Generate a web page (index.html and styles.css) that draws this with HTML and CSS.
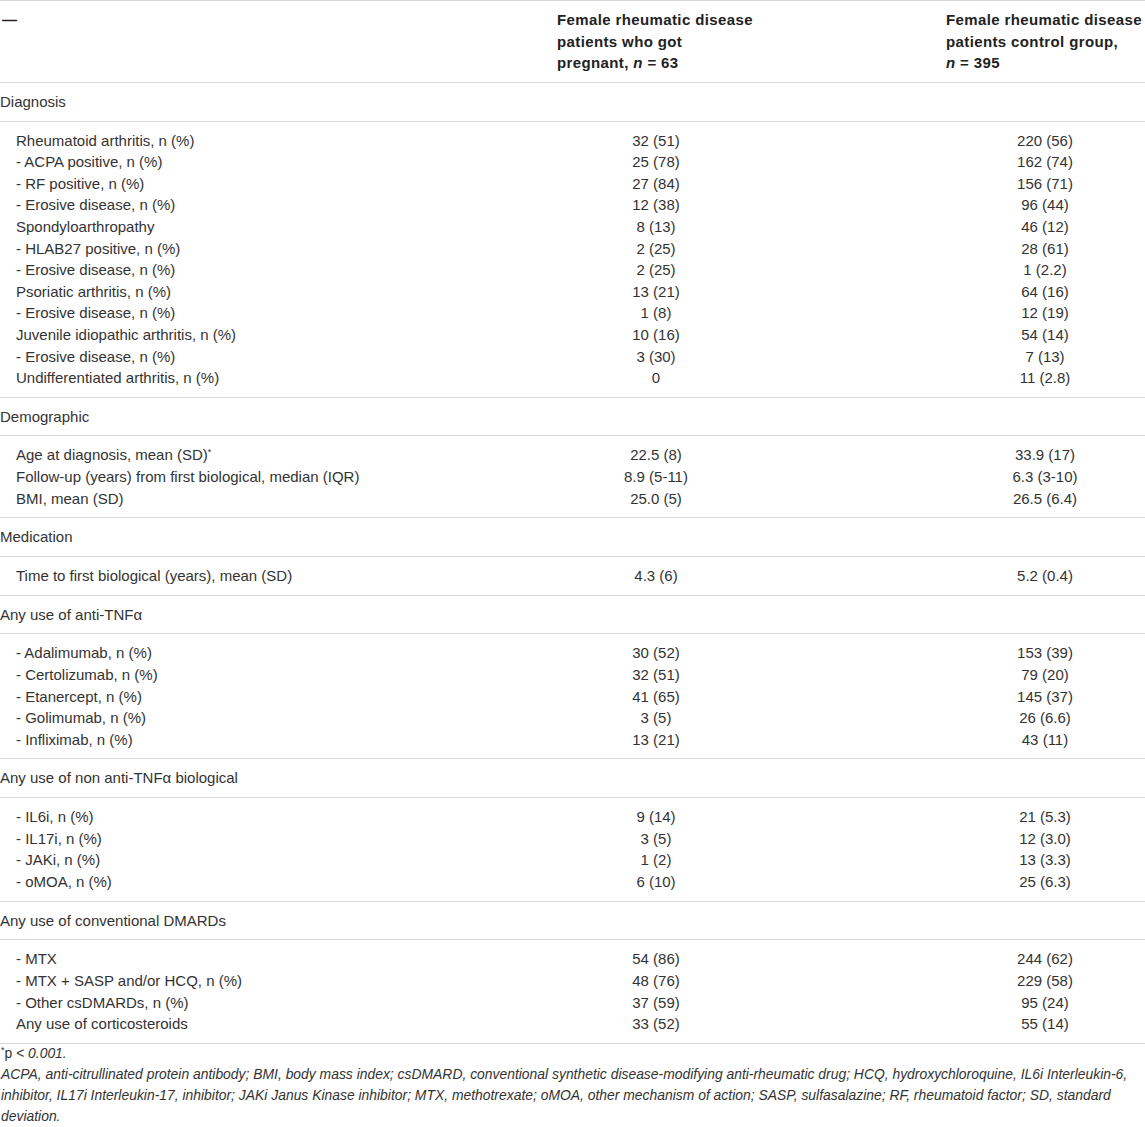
FILE: index.html
```html
<!DOCTYPE html>
<html lang="en">
<head>
<meta charset="utf-8">
<title>Table</title>
<link rel="stylesheet" href="styles.css">
</head>
<body>
<table class="tbl">
  <colgroup>
    <col class="c1">
    <col class="c2">
    <col class="c3">
  </colgroup>
  <thead>
    <tr>
      <th class="lab dash">—</th>
      <th class="hd">Female rheumatic disease<br>patients who got<br>pregnant, <i>n</i> = 63</th>
      <th class="hd">Female rheumatic disease<br>patients control group,<br><i>n</i> = 395</th>
    </tr>
  </thead>
  <tbody>
    <tr class="sec"><td class="lab">Diagnosis</td><td></td><td></td></tr>
    <tr class="grp">
      <td class="lab ind">Rheumatoid arthritis, n (%)<br>- ACPA positive, n (%)<br>- RF positive, n (%)<br>- Erosive disease, n (%)<br>Spondyloarthropathy<br>- HLAB27 positive, n (%)<br>- Erosive disease, n (%)<br>Psoriatic arthritis, n (%)<br>- Erosive disease, n (%)<br>Juvenile idiopathic arthritis, n (%)<br>- Erosive disease, n (%)<br>Undifferentiated arthritis, n (%)</td>
      <td><div class="val">32 (51)<br>25 (78)<br>27 (84)<br>12 (38)<br>8 (13)<br>2 (25)<br>2 (25)<br>13 (21)<br>1 (8)<br>10 (16)<br>3 (30)<br>0</div></td>
      <td><div class="val">220 (56)<br>162 (74)<br>156 (71)<br>96 (44)<br>46 (12)<br>28 (61)<br>1 (2.2)<br>64 (16)<br>12 (19)<br>54 (14)<br>7 (13)<br>11 (2.8)</div></td>
    </tr>
    <tr class="sec"><td class="lab">Demographic</td><td></td><td></td></tr>
    <tr class="grp">
      <td class="lab ind">Age at diagnosis, mean (SD)<sup>*</sup><br>Follow-up (years) from first biological, median (IQR)<br>BMI, mean (SD)</td>
      <td><div class="val">22.5 (8)<br>8.9 (5-11)<br>25.0 (5)</div></td>
      <td><div class="val">33.9 (17)<br>6.3 (3-10)<br>26.5 (6.4)</div></td>
    </tr>
    <tr class="sec"><td class="lab">Medication</td><td></td><td></td></tr>
    <tr class="grp">
      <td class="lab ind">Time to first biological (years), mean (SD)</td>
      <td><div class="val">4.3 (6)</div></td>
      <td><div class="val">5.2 (0.4)</div></td>
    </tr>
    <tr class="sec"><td class="lab">Any use of anti-TNFα</td><td></td><td></td></tr>
    <tr class="grp">
      <td class="lab ind">- Adalimumab, n (%)<br>- Certolizumab, n (%)<br>- Etanercept, n (%)<br>- Golimumab, n (%)<br>- Infliximab, n (%)</td>
      <td><div class="val">30 (52)<br>32 (51)<br>41 (65)<br>3 (5)<br>13 (21)</div></td>
      <td><div class="val">153 (39)<br>79 (20)<br>145 (37)<br>26 (6.6)<br>43 (11)</div></td>
    </tr>
    <tr class="sec"><td class="lab">Any use of non anti-TNFα biological</td><td></td><td></td></tr>
    <tr class="grp">
      <td class="lab ind">- IL6i, n (%)<br>- IL17i, n (%)<br>- JAKi, n (%)<br>- oMOA, n (%)</td>
      <td><div class="val">9 (14)<br>3 (5)<br>1 (2)<br>6 (10)</div></td>
      <td><div class="val">21 (5.3)<br>12 (3.0)<br>13 (3.3)<br>25 (6.3)</div></td>
    </tr>
    <tr class="sec"><td class="lab">Any use of conventional DMARDs</td><td></td><td></td></tr>
    <tr class="grp">
      <td class="lab ind">- MTX<br>- MTX + SASP and/or HCQ, n (%)<br>- Other csDMARDs, n (%)<br>Any use of corticosteroids</td>
      <td><div class="val">54 (86)<br>48 (76)<br>37 (59)<br>33 (52)</div></td>
      <td><div class="val">244 (62)<br>229 (58)<br>95 (24)<br>55 (14)</div></td>
    </tr>
  </tbody>
</table>
<div class="notes">
  <p class="note"><sup class="ast">*</sup>p <i>&lt; 0.001.</i></p>
  <p class="note"><i>ACPA, anti-citrullinated protein antibody; BMI, body mass index; csDMARD, conventional synthetic disease-modifying anti-rheumatic drug; HCQ, hydroxychloroquine, IL6i Interleukin-6, inhibitor, IL17i Interleukin-17, inhibitor; JAKi Janus Kinase inhibitor; MTX, methotrexate; oMOA, other mechanism of action; SASP, sulfasalazine; RF, rheumatoid factor; SD, standard deviation.</i></p>
</div>
</body>
</html>
```
FILE: styles.css
```css
html, body {
  margin: 0;
  padding: 0;
  background: #ffffff;
}
body {
  font-family: "Liberation Sans", Arial, Helvetica, sans-serif;
  color: #333333;
  width: 1145px;
}
.tbl {
  border-collapse: collapse;
  table-layout: fixed;
  width: 1145px;
  font-size: 15px;
  line-height: 21.6px;
}
.c1 { width: 547px; }
.c2 { width: 389px; }
.c3 { width: 209px; }
.tbl th,
.tbl td {
  padding: 8px 0;
  border-top: 1px solid #d6d6d6;
  border-bottom: 1px solid #d6d6d6;
  vertical-align: top;
  text-align: left;
  font-weight: normal;
}
.tbl .sec td {
  padding-top: 8.1px;
  padding-bottom: 8.1px;
}
.tbl th.hd {
  font-weight: 700;
  color: #222222;
  padding-left: 10px;
  letter-spacing: 0.38px;
  white-space: nowrap;
}
.tbl th.dash {
  font-weight: 700;
  color: #222222;
  padding-left: 2px;
}
.lab {
  padding-left: 1px;
}
.tbl td.ind {
  padding-left: 16px;
}
.val {
  margin-left: 10px;
  width: 198px;
  text-align: center;
}
sup {
  font-size: 9px;
  line-height: 0;
  vertical-align: 5px;
}
.notes {
  padding-left: 1px;
  margin-top: -1px;
  font-size: 13.9px;
  line-height: 21px;
  color: #333333;
}
.note {
  margin: 0;
}
```
